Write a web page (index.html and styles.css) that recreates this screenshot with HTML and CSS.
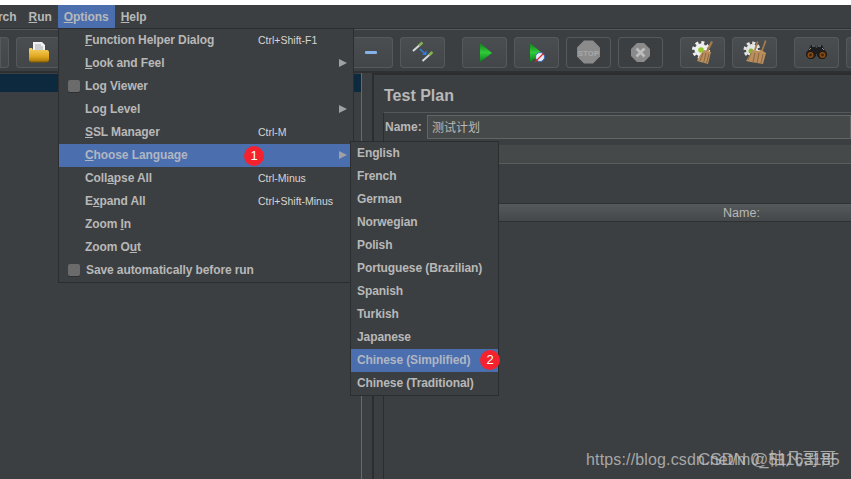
FILE: index.html
```html
<!DOCTYPE html>
<html lang="en">
<head>
<meta charset="utf-8">
<title>Test Plan</title>
<link rel="stylesheet" href="styles.css">
</head>
<body>
<div class="page">
  <div class="topgap"></div>
  <nav class="menubar">
    <span class="mb-item mb-clip">rch</span>
    <span class="mb-item"><u>R</u>un</span>
    <span class="mb-item mb-active"><u>O</u>ptions</span>
    <span class="mb-item"><u>H</u>elp</span>
  </nav>
  <div class="toolbar">
    <div class="btn btn-clip"></div>
    <div class="btn">
      <svg class="ico" viewBox="0 0 45 31"><defs><linearGradient id="fold" x1="0" y1="0" x2="0" y2="1"><stop offset="0" stop-color="#f6d265"/><stop offset="0.6" stop-color="#e0a820"/><stop offset="1" stop-color="#a87606"/></linearGradient></defs>
        <path d="M17 5h9l3 3v9H17z" fill="#f2f2f2"/><path d="M19 8h6M19 10h8M19 12h8" stroke="#a4a9ae" stroke-width="1"/>
        <path d="M13 12c0-1 1-1 2-1h1l1 2h14c1 0 2 1 2 2v8c0 1-1 2-2 2H15c-1 0-2-1-2-2z" fill="url(#fold)"/><path d="M13.500 23.500c0 1 1 1.500 2 1.500h15c1 0 2-.5 2-1.500" fill="none" stroke="#7f5a05" stroke-width="1"/>
      </svg>
    </div>
    <div class="tb-spacer"></div>
    <div class="btn">
      <svg class="ico" viewBox="0 0 45 31"><rect x="17" y="14" width="12" height="3" rx="1" fill="#86b2ea"/></svg>
    </div>
    <div class="btn">
      <svg class="ico" viewBox="0 0 45 31">
        <path d="M13 14l9-8" stroke="#d8d8d8" stroke-width="2"/><path d="M19 8.500l3.500-3" stroke="#7fb24a" stroke-width="2.400"/>
        <path d="M22.500 24l9-8" stroke="#d8d8d8" stroke-width="2"/><path d="M29 18l3.500-3" stroke="#7fb24a" stroke-width="2.400"/>
        <path d="M20 12l4 4" stroke="#2f7fe0" stroke-width="1.600"/><path d="M22 18h4.500v-4.500z" fill="#2f7fe0"/>
      </svg>
    </div>
    <div class="btn btn-group">
      <svg class="ico" viewBox="0 0 45 31"><defs><linearGradient id="gr" x1="0" y1="0" x2="0" y2="1"><stop offset="0" stop-color="#0f7f1a"/><stop offset="0.5" stop-color="#2fcb38"/><stop offset="1" stop-color="#08801a"/></linearGradient></defs><path d="M18 6l12 10-12 9z" fill="url(#gr)"/></svg>
    </div>
    <div class="btn">
      <svg class="ico" viewBox="0 0 45 31"><path d="M16 6l12 10-12 9z" fill="url(#gr)"/><circle cx="26" cy="20" r="4.500" fill="#e8eef8" stroke="#3a6fc4" stroke-width="1"/><path d="M21 25l9-9" stroke="#d82626" stroke-width="1.300"/></svg>
    </div>
    <div class="btn btn-off">
      <svg class="ico" viewBox="0 0 45 31"><path d="M18 4h9l7 7v9l-7 7h-9l-7-7v-9z" transform="translate(0 -0.500)" fill="#8b8b8b"/><text x="22.500" y="18.500" class="stop-t">STOP</text></svg>
    </div>
    <div class="btn btn-off">
      <svg class="ico" viewBox="0 0 45 31"><path d="M19 6h7l6 6v7l-6 6h-7l-6-6v-7z" fill="#8b8b8b"/><path d="M18.500 11.500l8 8m0-8l-8 8" stroke="#bdbdbd" stroke-width="2.600"/></svg>
    </div>
    <div class="btn btn-group">
      <svg class="ico" viewBox="0 0 45 31">
        <circle cx="21" cy="13" r="6.500" fill="#efefef"/><circle cx="21" cy="13" r="7.500" fill="none" stroke="#efefef" stroke-width="3" stroke-dasharray="3 2.900"/>
        <circle cx="21" cy="13" r="2.800" fill="#93c92a"/>
        <path d="M31 4l2 1-5 10-2-1z" fill="#a5794a"/><path d="M24 13l7 2-3 12-11-3 3-6z" fill="#b88e5e"/><path d="M23 16l-3 8M26 16l-2.500 10M29 17l-2.500 9" stroke="#8e673e" stroke-width="1"/>
      </svg>
    </div>
    <div class="btn">
      <svg class="ico" viewBox="0 0 45 31">
        <circle cx="20" cy="13" r="6" fill="#e4e4e4"/><circle cx="20" cy="13" r="7" fill="none" stroke="#e4e4e4" stroke-width="3" stroke-dasharray="3 2.500"/>
        <circle cx="19" cy="14" r="2.500" fill="#8cb030"/>
        <path d="M25 4l1.500 1-3 9-1.500-1zM33 3l1.500 1-4 11-1.500-1z" fill="#a5794a"/><path d="M21 13l5 1 3-1 5 3-3 11-12-2-5-1z" fill="#b88e5e"/><path d="M19 16l-3 7M23 16l-2 9M27 16l-2 10M31 17l-2 9" stroke="#8e673e" stroke-width="1"/>
      </svg>
    </div>
    <div class="btn btn-group">
      <svg class="ico" viewBox="0 0 45 31">
        <path d="M17 8h4l1 3h1l1-3h4l2 4 3 4v3l-3 3h-4l-3-3v-2h-1v2l-3 3h-4l-3-3v-3l3-4z" fill="#1d1d1d"/><path d="M18 9h3M24 9h3M15 13l2-2M30 13l-2-2" stroke="#8d8d8d" stroke-width="1"/>
        <circle cx="16.500" cy="18" r="3" fill="#8a4a14"/><circle cx="28.500" cy="18" r="3" fill="#8a4a14"/><circle cx="16.500" cy="18" r="1.400" fill="#3f230d"/><circle cx="28.500" cy="18" r="1.400" fill="#3f230d"/>
      </svg>
    </div>
    <div class="btn"></div>
  </div>
  <div class="main">
    <aside class="tree"><div class="tree-sel"></div></aside>
    <div class="divider"></div>
    <section class="panel">
      <h1 class="title">Test Plan</h1>
      <div class="form">
        <div class="name-row"><label class="name-label">Name:</label><div class="name-input">测试计划</div></div>
        <div class="band"></div>
        <div class="table-head"><span></span><span>Name:</span></div>
      </div>
    </section>
  </div>

  <div class="menu menu-options">
    <div class="mi"><span class="mi-label"><u>F</u>unction Helper Dialog</span><span class="mi-key">Ctrl+Shift-F1</span></div>
    <div class="mi"><span class="mi-label"><u>L</u>ook and Feel</span><span class="mi-arrow"></span></div>
    <div class="mi mi-check"><span class="check"></span><span>Log Viewer</span></div>
    <div class="mi"><span class="mi-label">Log Level</span><span class="mi-arrow"></span></div>
    <div class="mi"><span class="mi-label"><u>S</u>SL Manager</span><span class="mi-key">Ctrl-M</span></div>
    <div class="mi mi-on"><span class="mi-label"><u>C</u>hoose Language</span><span class="mi-arrow"></span><span class="badge badge-one">1</span></div>
    <div class="mi"><span class="mi-label">Coll<u>a</u>pse All</span><span class="mi-key">Ctrl-Minus</span></div>
    <div class="mi"><span class="mi-label">E<u>x</u>pand All</span><span class="mi-key">Ctrl+Shift-Minus</span></div>
    <div class="mi"><span class="mi-label">Zoom <u>I</u>n</span></div>
    <div class="mi"><span class="mi-label">Zoom O<u>u</u>t</span></div>
    <div class="mi mi-check mi-save"><span class="check"></span><span>Save automatically before run</span></div>
  </div>

  <div class="menu menu-lang">
    <div class="li">English</div>
    <div class="li">French</div>
    <div class="li">German</div>
    <div class="li">Norwegian</div>
    <div class="li">Polish</div>
    <div class="li">Portuguese (Brazilian)</div>
    <div class="li">Spanish</div>
    <div class="li">Turkish</div>
    <div class="li">Japanese</div>
    <div class="li li-on">Chinese (Simplified)<span class="badge badge-two">2</span></div>
    <div class="li">Chinese (Traditional)</div>
  </div>

  <div class="wm wm-url">https://blog.csdn.net/m0_51163185</div>
  <div class="wm wm-name">CSDN @柚凡哥哥</div>
</div>
</body>
</html>
```

FILE: styles.css
```css
* { box-sizing: border-box; }
html, body { margin: 0; padding: 0; }
body {
  width: 851px;
  height: 479px;
  overflow: hidden;
  background: #3c3f41;
  font-family: "Liberation Sans", Arial, sans-serif;
  color: #b8b8b8;
}
.page {
  position: relative;
  width: 851px;
  height: 479px;
  display: flex;
  flex-direction: column;
  overflow: hidden;
}
.topgap { height: 5px; background: #ffffff; }

.menubar {
  height: 24px;
  display: flex;
  align-items: stretch;
  background: #3c3f41;
  border-bottom: 1px solid #2e3031;
  font-size: 12px;
  font-weight: 700;
  letter-spacing: -0.05px;
}
.mb-item { display: flex; align-items: center; padding: 0 6px; white-space: pre; }
.mb-item u { text-underline-offset: 1px; }
.mb-clip { padding: 0 6px 0 0; margin-left: -2px; }
.mb-active { background: #4b6eaf; }

.toolbar {
  height: 44px;
  padding-top: 7px;
  display: flex;
  gap: 7px;
  background: #3c3f41;
  border-top: 1px solid #55585a;
  border-bottom: 2px solid #2e3031;
}
.btn {
  flex: none;
  width: 45px;
  height: 31px;
  border-radius: 4px;
  background: linear-gradient(#4a4e50, #424648);
  box-shadow: inset 0 0 0 1px #55595b;
}
.btn-clip { width: 9px; border-radius: 0 4px 4px 0; }
.btn-off { background: #3c3f41; }
.btn-group { margin-left: 10px; }
.tb-spacer { flex: none; width: 273px; }
.ico { display: block; width: 45px; height: 31px; }
.stop-t {
  font-family: "Liberation Sans", Arial, sans-serif;
  font-size: 8px;
  font-weight: 700;
  fill: #a8a8a8;
  text-anchor: middle;
}

.main { flex: 1; display: flex; min-height: 0; }
.tree {
  width: 362px;
  flex: none;
  border-right: 1px solid #686a6c;
}
.tree-sel { height: 18px; margin-top: 1px; background: #0d293e; }
.divider { width: 10px; flex: none; }
.panel {
  flex: 1;
  display: flex;
  flex-direction: column;
  border-left: 2px solid #2b2d2e;
  border-top: 2px solid #2b2d2e;
  padding-left: 9px;
}
.title {
  margin: 0;
  height: 37px;
  padding-top: 12px;
  padding-left: 1px;
  font-size: 16px;
  line-height: 18px;
  font-weight: 700;
  color: #b8b8b8;
}
.form {
  flex: 1;
  border-left: 1px solid #2b2d2e;
  border-top: 1px solid #55585a;
  display: flex;
  flex-direction: column;
}
.name-row { display: flex; align-items: center; padding-top: 2px; height: 26px; }
.name-label {
  width: 43px;
  flex: none;
  padding-left: 1px;
  font-size: 12px;
  font-weight: 700;
}
.name-input {
  flex: 1;
  height: 24px;
  line-height: 22px;
  padding-left: 4px;
  background: #45494a;
  border: 1px solid #646464;
  font-family: "Noto Sans CJK SC", sans-serif;
  font-size: 12px;
  color: #b8b8b8;
}
.band {
  height: 19px;
  margin-top: 6px;
  background: #45494a;
  border-bottom: 1px solid #5a5d5e;
}
.table-head {
  margin-top: 39px;
  height: 19px;
  display: grid;
  grid-template-columns: 248px 1fr;
  align-items: center;
  background: linear-gradient(#55595b, #45484a);
  border-top: 1px solid #2e3031;
  border-bottom: 1px solid #2e3031;
  font-size: 12.500px;
  text-align: center;
}

.menu {
  position: absolute;
  background: #3c3f41;
  border: 1px solid #2b2d2e;
  font-size: 12px;
  font-weight: 700;
  letter-spacing: -0.1px;
}
.menu-options { left: 58px; top: 28px; width: 296px; height: 255px; }
.menu-lang { left: 350px; top: 141px; width: 149px; height: 255px; }
.mi {
  position: relative;
  height: 23px;
  display: flex;
  align-items: center;
  padding-left: 26px;
  padding-bottom: 2px;
}
.mi-label { width: 173px; flex: none; white-space: nowrap; }
.mi-key { font-size: 10.500px; font-weight: 400; letter-spacing: 0; color: #d6d6d6; white-space: nowrap; }
.mi-arrow {
  position: absolute;
  left: 280px;
  top: 7px;
  width: 0;
  height: 0;
  border-style: solid;
  border-width: 4.500px 0 4.500px 8px;
  border-color: transparent transparent transparent #9fa1a3;
}
.mi-on, .li-on { background: #4b6eaf; color: #b0b6c2; }
.mi-check { padding-left: 9px; gap: 5px; }
.mi-save { gap: 6px; }
.check {
  width: 12px;
  height: 12px;
  flex: none;
  border-radius: 2px;
  background: #6b6b6b;
  box-shadow: 0 1px 0 #2e3031;
}
.li {
  position: relative;
  height: 23px;
  line-height: 22px;
  padding-left: 6px;
  white-space: nowrap;
}
.badge {
  position: absolute;
  width: 20px;
  height: 20px;
  border-radius: 50%;
  background: #f5222d;
  color: #ffffff;
  font-size: 13px;
  font-weight: 400;
  letter-spacing: 0;
  line-height: 20px;
  text-align: center;
}
.badge-one { left: 185px; top: 2px; }
.badge-two { left: 129px; top: 1px; }

.wm {
  position: absolute;
  top: 450px;
  line-height: 20px;
  color: rgba(195, 195, 195, 0.8);
  white-space: nowrap;
  font-family: "Liberation Sans", "Noto Sans CJK SC", sans-serif;
}
.wm-url { left: 586px; font-size: 16px; letter-spacing: 0.15px; }
.wm-name { left: 698px; font-size: 17px; }
```
